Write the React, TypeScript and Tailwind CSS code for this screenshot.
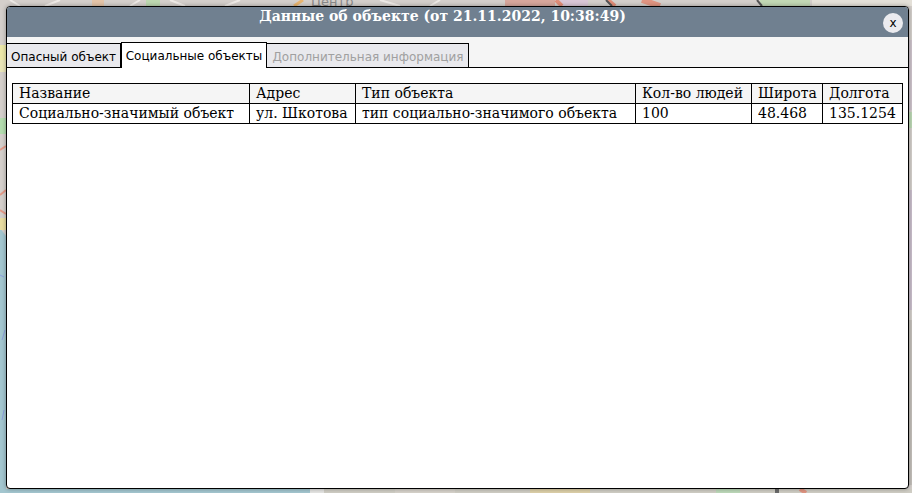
const columns = [
  { title: 'Название', value: 'Социально-значимый объект', width: 'w-[237px]' },
  { title: 'Адрес', value: 'ул. Шкотова', width: 'w-[106px]' },
  { title: 'Тип объекта', value: 'тип социально-значимого объекта', width: 'w-[280px]' },
  { title: 'Кол-во людей', value: '100', width: 'w-[116px]' },
  { title: 'Широта', value: '48.468', width: 'w-[71px]' },
  { title: 'Долгота', value: '135.1254', width: 'w-auto' },
]

function MapBackdrop() {
  return (
    <svg className="absolute inset-0" width="912" height="493" viewBox="0 0 912 493" fill="none">
      <rect width="912" height="493" fill="#d4cfcb" />
      {/* water on the lower left */}
      <path d="M0 228 L6 236 L6 489 L330 489 L330 493 L0 493 Z" fill="#a3c6cf" />
      <rect x="0" y="489" width="310" height="4" fill="#a3c6cf" />
      <rect x="310" y="489" width="602" height="4" fill="#cfcdc4" />
      {/* top strip */}
      <path d="M10 0 L20 6 M60 0 L45 6 M140 0 L130 6 M170 0 L185 6 M240 0 L225 6 M380 0 L400 6 M440 0 L430 6" stroke="#eeeae6" strokeWidth="2" />
      <rect x="92" y="0" width="12" height="6" fill="#e3c4a8" />
      <rect x="146" y="0" width="14" height="6" fill="#bcd8b0" />
      <path d="M294 6 L303 0" stroke="#e9b56f" strokeWidth="3" />
      <rect x="505" y="0" width="50" height="6" fill="#d7a79c" />
      <rect x="560" y="0" width="28" height="6" fill="#d9c6d6" />
      <path d="M556 0 L562 6" stroke="#e08d78" strokeWidth="4" />
      <path d="M608 0 L615 6" stroke="#e08d78" strokeWidth="4" />
      <path d="M642 0 L660 6" stroke="#e09582" strokeWidth="6" />
      <rect x="760" y="0" width="50" height="6" fill="#c2d8b4" />
      <rect x="812" y="0" width="100" height="6" fill="#e4e0d8" />
      <path d="M606 0 L612 6 M757 0 L762 6" stroke="#555555" strokeWidth="2" />
      <text x="311" y="6" fontFamily="'DejaVu Sans', sans-serif" fontSize="13" fill="#8a8a8a">Центр</text>
      {/* left strip */}
      <rect x="0" y="45" width="6" height="22" fill="#ece7a8" />
      <rect x="0" y="60" width="6" height="12" fill="#e8e4b8" />
      <rect x="0" y="118" width="6" height="16" fill="#b3dcae" />
      <rect x="0" y="218" width="6" height="12" fill="#e8dca0" />
      <path d="M0 150 L6 146 M0 195 L6 190 M0 210 L6 214" stroke="#e39a88" strokeWidth="2" />
      <path d="M0 275 L4 277 M2 340 L5 330 M2 420 L4 410" stroke="#8c9fe0" strokeWidth="1" />
      {/* right strip */}
      <rect x="909" y="40" width="3" height="70" fill="#cdc3cb" />
      <rect x="909" y="112" width="3" height="16" fill="#bcd8b4" />
      <rect x="909" y="190" width="3" height="120" fill="#c9becb" />
      <rect x="909" y="320" width="3" height="165" fill="#c4c0bb" />
      {/* bottom strip */}
      <rect x="310" y="489" width="14" height="4" fill="#e4e4e2" />
      <rect x="395" y="489" width="60" height="4" fill="#d6d2ca" />
      <rect x="530" y="489" width="60" height="4" fill="#dccfa8" />
      <rect x="716" y="489" width="24" height="4" fill="#bcd8b8" />
      <rect x="775" y="489" width="4" height="4" fill="#6a6a6a" />
      <path d="M800 489 L806 493" stroke="#e09582" strokeWidth="4" />
    </svg>
  )
}

export default function App() {
  return (
    <div className="relative h-[493px] w-[912px] overflow-hidden pb-[4px] pl-[6px] pr-[3px] pt-[6px]">
      <MapBackdrop />
      <div className="relative flex h-full flex-col overflow-hidden rounded-[4px] border border-black bg-white shadow-[0_0_4px_rgba(0,0,0,0.35)]">
        <div className="relative h-[30px] shrink-0 bg-[#708090] pr-[30px] text-center font-['DejaVu_Serif',serif] text-[14px] font-bold leading-[18px] text-white">
          Данные об объекте (от 21.11.2022, 10:38:49)
          <button className="absolute right-[5px] top-[6px] flex h-[20px] w-[20px] items-center justify-center rounded-full bg-[#ebebef] font-['DejaVu_Sans',sans-serif] text-[12px] font-normal text-black">
            x
          </button>
        </div>

        <div className="flex h-[31px] shrink-0 items-end whitespace-nowrap border-b border-black bg-[#f5f5f5] font-['DejaVu_Sans',sans-serif] text-[12px]">
          <div className="flex h-[24px] w-[114px] items-center justify-center border-r border-t border-black bg-[#e9e9ed] pt-[2px] text-black">
            Опасный объект
          </div>
          <div className="relative -mb-px flex h-[26px] w-[146px] items-center justify-center border-x border-t border-black bg-white pt-[1px] text-black">
            Социальные объекты
          </div>
          <div className="flex h-[24px] w-[202px] items-center justify-center border-r border-t border-black bg-[#e9e9ed] pl-[1px] pt-[2px] text-[#a0a0a0]">
            Дополнительная информация
          </div>
        </div>

        <div className="px-[5px] pt-[15px]">
          <table className="w-[891px] table-fixed border-collapse font-['DejaVu_Serif',serif] text-[14px] leading-[19px] text-black">
            <thead>
              <tr className="bg-[#f5f5f5]">
                {columns.map((col) => (
                  <td key={col.title} className={`${col.width} h-[20px] border border-black px-[6px] py-0`}>
                    {col.title}
                  </td>
                ))}
              </tr>
            </thead>
            <tbody>
              <tr>
                {columns.map((col) => (
                  <td key={col.title} className="h-[20px] whitespace-nowrap border border-black px-[6px] py-0">
                    {col.value}
                  </td>
                ))}
              </tr>
            </tbody>
          </table>
        </div>
      </div>
    </div>
  )
}
